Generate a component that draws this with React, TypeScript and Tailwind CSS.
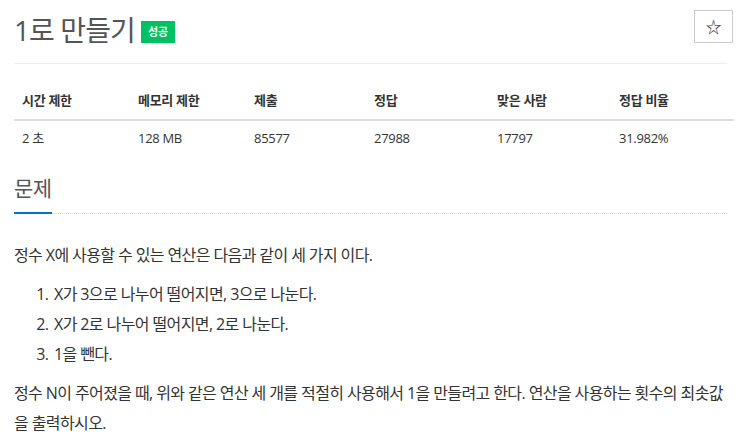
import React from 'react'

const stats = [
    { label: '시간 제한', value: '2 초', w: 'w-[116px]' },
    { label: '메모리 제한', value: '128 MB', w: 'w-[116px]' },
    { label: '제출', value: '85577', w: 'w-[120px]' },
    { label: '정답', value: '27988', w: 'w-[123px]' },
    { label: '맞은 사람', value: '17797', w: 'w-[122px]' },
    { label: '정답 비율', value: '31.982%', w: 'w-[123px]' },
]

export default function App() {
    return (
        <div
            className="w-[741px] h-[442px] overflow-hidden bg-white px-[14px] text-[#333]"
            style={{ fontFamily: '"Open Sans", "Noto Sans CJK KR", sans-serif' }}
        >
            <div className="flex items-start justify-between pt-[10px] h-[64px] border-b border-[#eee]">
                <div className="flex items-center gap-[6px] pt-[2px]">
                    <h1 className="text-[28px] leading-[36px] text-[#555] tracking-[-0.9px]">1로 만들기</h1>
                    <span className="mt-[4px] bg-[#00c264] text-white text-[11px] leading-[22px] px-[7px] font-bold">성공</span>
                </div>
                <button className="w-[39px] h-[33px] border border-[#ccc] flex items-center justify-center text-[#333] text-[16px] mr-[-6px]">
                    ☆
                </button>
            </div>

            <table className="mt-[18px] w-[720px] text-[13px] border-collapse tracking-[-0.3px]">
                <thead>
                    <tr className="border-b-2 border-[#ddd]">
                        {stats.map((s) => (
                            <th key={s.label} className={`${s.w} text-left font-bold px-[8px] h-[38px] text-[#333]`}>
                                {s.label}
                            </th>
                        ))}
                    </tr>
                </thead>
                <tbody>
                    <tr>
                        {stats.map((s) => (
                            <td key={s.label} className="px-[8px] h-[36px] text-[#333]">
                                {s.value}
                            </td>
                        ))}
                    </tr>
                </tbody>
            </table>

            <div className="mt-[17px] border-b border-dotted border-[#ddd]">
                <h2 className="inline-block text-[21px] leading-[30px] text-[#555] pb-[9px] border-b-2 border-[#0076c0] mb-[-1px] tracking-[-0.5px]">
                    문제
                </h2>
            </div>

            <div className="text-[16px] leading-[30px] text-[#333] tracking-[-0.6px]">
                <p className="mt-[26px]">정수 X에 사용할 수 있는 연산은 다음과 같이 세 가지 이다.</p>
                <ol className="list-decimal pl-[38px] mt-[9px]">
                    <li className="pl-[2px]">X가 3으로 나누어 떨어지면, 3으로 나눈다.</li>
                    <li className="pl-[2px]">X가 2로 나누어 떨어지면, 2로 나눈다.</li>
                    <li className="pl-[2px]">1을 뺀다.</li>
                </ol>
                <p className="mt-[9px]">
                    정수 N이 주어졌을 때, 위와 같은 연산 세 개를 적절히 사용해서 1을 만들려고 한다. 연산을 사용하는 횟수의 최솟값을 출력하시오.
                </p>
            </div>
        </div>
    )
}
